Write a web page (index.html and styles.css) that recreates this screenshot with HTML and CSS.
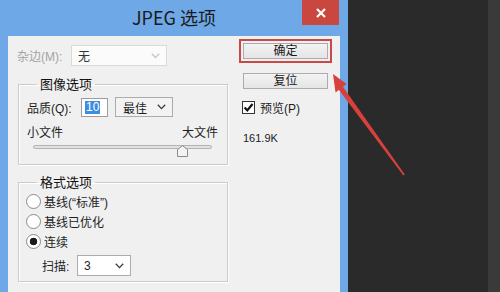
FILE: index.html
```html
<!DOCTYPE html>
<html lang="zh-CN">
<head>
<meta charset="utf-8">
<title>JPEG 选项</title>
<link rel="stylesheet" href="styles.css">
</head>
<body>
<div class="window">
  <div class="titlebar">
    <span class="title">JPEG 选项</span>
    <span class="close"><svg width="12" height="10" viewBox="0 0 12 10"><path d="M2 1 L10 9 M10 1 L2 9" stroke="#fff" stroke-width="2.2" fill="none"/></svg></span>
  </div>
  <div class="content">
    <div class="left">
      <div class="row matte">
        <span class="lbl disabled">杂边(M):</span>
        <div class="select sel-matte"><span>无</span><svg class="chev" width="9" height="6" viewBox="0 0 9 6"><path d="M0.8 0.8 L4.5 4.6 L8.2 0.8" stroke="#c4c4c4" stroke-width="1.3" fill="none"/></svg></div>
      </div>
      <fieldset class="group g1">
        <legend>图像选项</legend>
        <div class="row quality">
          <span class="lbl">品质(Q):</span>
          <div class="input"><span class="seltext">10</span></div>
          <div class="select sel-q"><span>最佳</span><svg class="chev" width="9" height="6" viewBox="0 0 9 6"><path d="M0.8 0.8 L4.5 4.6 L8.2 0.8" stroke="#3a3a3a" stroke-width="1.3" fill="none"/></svg></div>
        </div>
        <div class="row scale"><span>小文件</span><span>大文件</span></div>
        <div class="slider">
          <div class="track"></div>
          <svg class="thumb" style="left: 83.3%" width="11" height="12" viewBox="0 0 11 12"><path d="M0.5 4.5 L5.5 0.7 L10.5 4.5 V11.5 H0.5 Z" fill="#f3f3f3" stroke="#8c8c8c"/></svg>
        </div>
      </fieldset>
      <fieldset class="group g2">
        <legend>格式选项</legend>
        <div class="radio"><span class="dot"></span><span>基线(“标准”)</span></div>
        <div class="radio"><span class="dot"></span><span>基线已优化</span></div>
        <div class="radio"><span class="dot on"></span><span>连续</span></div>
        <div class="row scan">
          <span class="lbl">扫描:</span>
          <div class="select sel-scan"><span>3</span><svg class="chev" width="9" height="6" viewBox="0 0 9 6"><path d="M0.8 0.8 L4.5 4.6 L8.2 0.8" stroke="#3a3a3a" stroke-width="1.3" fill="none"/></svg></div>
        </div>
      </fieldset>
    </div>
    <div class="right">
      <button class="btn ok">确定</button>
      <button class="btn reset">复位</button>
      <div class="check"><span class="box"><svg width="11" height="11" viewBox="0 0 11 11"><path d="M1.6 5.4 L4.3 8.4 L9.5 2" stroke="#111" stroke-width="2.2" fill="none"/></svg></span><span>预览(P)</span></div>
      <div class="size">161.9K</div>
    </div>
  </div>
</div>
<div class="desk"></div>
<div class="edge"></div>
<svg class="arrow" width="500" height="292" viewBox="0 0 500 292">
  <polygon points="333,74 346.5,84 335.5,92.5" fill="#d8403c"/>
  <polygon points="338.6,89.6 342.8,86.6 404.8,174.6 403.4,175.4" fill="#d8403c"/>
</svg>
</body>
</html>
```

FILE: styles.css
```css
* { box-sizing: border-box; }
html, body { margin: 0; padding: 0; }
body {
  width: 500px;
  height: 292px;
  overflow: hidden;
  background: #2a2a2a;
  display: flex;
  position: relative;
  font-family: "Liberation Sans", "Noto Sans CJK SC", sans-serif;
  font-size: 12px;
  color: #1e1e1e;
}
.window {
  width: 348px;
  flex: none;
  background: #6ea8e6;
  display: flex;
  flex-direction: column;
  padding: 0 8px;
}
.titlebar {
  height: 36px;
  flex: none;
  display: grid;
  grid-template-columns: 1fr auto 1fr;
}
.title {
  grid-column: 2;
  align-self: center;
  font-family: "Noto Sans CJK SC", sans-serif;
  font-size: 18px;
  line-height: 1;
  color: #1a1a1a;
  padding-bottom: 2px;
}
.close {
  grid-column: 3;
  justify-self: end;
  align-self: start;
  width: 37px;
  height: 25px;
  margin-right: 1px;
  background: #c9473f;
  display: flex;
  align-items: center;
  justify-content: center;
}
.content {
  flex: 1;
  background: #f0f0f0;
  display: flex;
}
.left { width: 230px; flex: none; padding-top: 9px; }
.right {
  flex: 1;
  padding-left: 5px;
  display: flex;
  flex-direction: column;
  align-items: flex-start;
}
.row { display: flex; align-items: center; }
.lbl { flex: none; }
.disabled { color: #a3a3a3; }
.matte { padding-left: 9px; height: 21px; }
.matte .lbl { width: 54px; }
.select {
  display: flex;
  align-items: center;
  justify-content: space-between;
  border: 1px solid #acacac;
  background: #fff;
  padding: 0 6px 0 6px;
}
.sel-matte { width: 96px; height: 21px; border-color: #dadada; background: #fbfbfb; color: #333; }
.group {
  margin: 0;
  border: 1px solid #cbcbcb;
  box-shadow: inset 1px 1px 0 #fff, 1px 1px 0 #fff;
  width: 210px;
  margin-left: 10px;
  padding: 0 9px 7px 8px;
}
.group legend {
  padding: 0 3px;
  margin-left: 10px;
  font-family: "Noto Sans CJK SC", sans-serif;
  font-size: 13px;
  line-height: 16px;
  color: #111;
}
.g1 { margin-top: 10px; }
.quality { margin-top: 5px; height: 20px; }
.quality .lbl { width: 54px; }
.input {
  width: 27px;
  height: 19px;
  border: 1px solid #9c9c9c;
  background: #fff;
  padding-left: 3px;
  display: flex;
  align-items: center;
}
.seltext { background: #3d8ee0; color: #fff; line-height: 13px; padding: 0 1px; }
.sel-q { margin-left: 7px; width: 58px; height: 20px; background: #f3f3f3; padding-left: 7px; }
.scale { margin-top: 8px; justify-content: space-between; line-height: 16px; }
.slider { margin: 0 6px; height: 12px; position: relative; }
.track {
  height: 4px;
  margin-top: 4px;
  border: 1px solid #b3b3b3;
  background: #e2e2e2;
  border-radius: 2px;
}
.thumb { position: absolute; top: 0; margin-left: -5.5px; }
.g2 { margin-top: 9px; padding-bottom: 5px; }
.radio { display: flex; align-items: center; gap: 3px; height: 20px; margin-left: -1px; }
.radio:first-of-type { margin-top: 1px; }
.dot {
  width: 15px;
  height: 15px;
  border-radius: 50%;
  border: 1px solid #8a8a8a;
  background: #fff;
  flex: none;
}
.dot.on { background: radial-gradient(circle, #1a1a1a 0 3.5px, #fff 4.1px); }
.scan { margin-top: 4px; padding-left: 15px; }
.scan .lbl { width: 35px; }
.sel-scan { width: 54px; height: 21px; }
.btn {
  width: 85px;
  padding: 0;
  font: inherit;
  line-height: 1;
  color: #1a1a1a;
  border: 1px solid #acacac;
  background: linear-gradient(#f3f3f3, #e5e5e5);
  display: flex;
  align-items: center;
  justify-content: center;
}
.ok {
  margin-top: 7px;
  height: 16px;
  outline: 2px solid #c94848;
  outline-offset: 2px;
}
.reset { margin-top: 14px; height: 16px; }
.check { margin-top: 12px; margin-left: -1px; display: flex; align-items: center; gap: 5px; height: 13px; }
.box {
  width: 13px;
  height: 13px;
  border: 1px solid #333;
  background: #fff;
  display: flex;
  align-items: center;
  justify-content: center;
}
.size { margin-top: 17px; font-size: 11px; line-height: 14px; color: #222; }
.desk { flex: 1; background: #2a2a2a; }
.edge { width: 12px; flex: none; background: #3a3a3a; }
.arrow { position: absolute; left: 0; top: 0; pointer-events: none; }
```
